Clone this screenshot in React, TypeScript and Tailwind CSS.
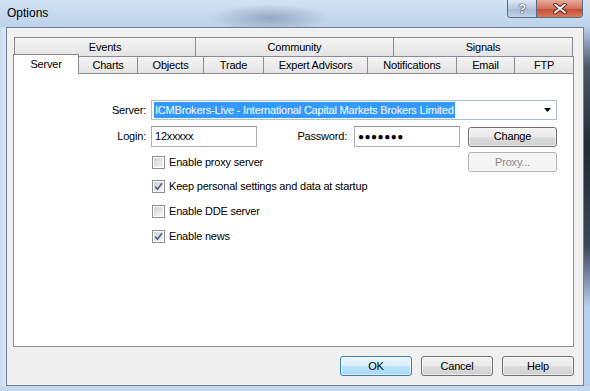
import React from "react";

const FONT = "font-['Liberation_Sans',Arial,sans-serif]";

function TopTab({ label, w, first }: { label: string; w: string; first?: boolean }) {
  return (
    <div
      className={`${w} ${first ? "" : "-ml-px"} h-[19px] border-l border-t border-r border-[#898c95] bg-[linear-gradient(to_bottom,#f4f4f4,#e4e4e4)] flex items-center justify-center pt-[1px]`}
    >
      {label}
    </div>
  );
}

function Tab({ label, w }: { label: string; w: string }) {
  return (
    <div
      className={`${w} -ml-px h-[17px] self-start border-l border-t border-r border-[#898c95] bg-[linear-gradient(to_bottom,#f4f4f4,#e4e4e4)] flex items-center justify-center pt-[1px]`}
    >
      {label}
    </div>
  );
}

function CheckBox({ checked, label }: { checked?: boolean; label: string }) {
  return (
    <div className="flex items-center h-[20px]">
      <div className="w-[13px] h-[13px] border border-[#8e8f8f] bg-white p-[1px]">
        <div className="w-full h-full bg-[linear-gradient(135deg,#cfd1d4,#f7f7f7)] flex items-center justify-center">
          {checked && (
            <svg width="9" height="9" viewBox="0 0 9 9">
              <path d="M1.2 4.6 L3.5 7.2 L8 1.2" fill="none" stroke="#4a5f8e" strokeWidth="1.7" />
            </svg>
          )}
        </div>
      </div>
      <span className="ml-[4px]">{label}</span>
    </div>
  );
}

function Button({ children, w, disabled, primary }: { children: React.ReactNode; w: string; disabled?: boolean; primary?: boolean }) {
  let cls = "";
  if (disabled) cls = "border-[#adb2b5] bg-[#f4f4f4] text-[#8a8a8a]";
  else if (primary)
    cls = "border-[#3c7fb1] bg-[linear-gradient(to_bottom,#eaf6fd_0%,#d9f0fc_50%,#bee6fd_51%,#a7d9f5_100%)] text-black";
  else
    cls = "border-[#707070] bg-[linear-gradient(to_bottom,#f2f2f2_0%,#ebebeb_50%,#dddddd_51%,#cfcfcf_100%)] text-black";
  return (
    <div className={`${w} h-[20px] rounded-[3px] border ${cls} flex items-center justify-center shadow-[inset_0_0_0_1px_rgba(255,255,255,0.6)]`}>
      {children}
    </div>
  );
}

export default function App() {
  return (
    <div
      className={`${FONT} w-[590px] h-[391px] overflow-hidden flex flex-col bg-[linear-gradient(to_bottom,#c9dbf0,#b9d0eb_40%,#c3d7ee)] text-[11px] tracking-[-0.2px] text-black`}
    >
      {/* Title bar */}
      <div className="h-[27px] flex items-start justify-between bg-[radial-gradient(ellipse_60px_14px_at_270px_18px,rgba(60,80,110,0.35),transparent),linear-gradient(to_bottom,#d2e2f4,#bcd2ec)]">
        <div className="pl-[7px] pt-[6px] text-[12px] tracking-normal text-black leading-[15px]">Options</div>
        <div className="flex mr-[7px] rounded-b-[4px] overflow-hidden border border-t-0 border-[#5a6a80]">
          <div className="w-[29px] h-[17px] bg-[linear-gradient(to_bottom,#dce7f4,#b7c9df_50%,#a3b9d4_51%,#bfd2e8)] flex items-center justify-center border-r border-[#5a6a80]">
            <span className="text-[13px] font-bold text-white leading-none [text-shadow:0_0_1px_#243850,0_0_1px_#243850,0_0_1px_#243850]">?</span>
          </div>
          <div className="w-[45px] h-[17px] bg-[linear-gradient(to_bottom,#e9ab9c,#d4705c_50%,#c54a33_51%,#d87a5c)] flex items-center justify-center">
            <svg width="14" height="11" viewBox="0 0 14 11">
              <path d="M2 1.5 L12 9.5 M12 1.5 L2 9.5" stroke="#4a1a10" strokeWidth="3.6" strokeLinecap="round" />
              <path d="M2 1.5 L12 9.5 M12 1.5 L2 9.5" stroke="#ffffff" strokeWidth="2" strokeLinecap="round" />
            </svg>
          </div>
        </div>
      </div>

      {/* Body row with frame */}
      <div className="flex-1 flex pb-[5px]">
        <div className="w-[6px] bg-[linear-gradient(to_right,#c6d9ef,#dce8f5)]" />
        <div className="w-[578px] border border-[#6e7f96] bg-[#f0f0f0] flex flex-col">
          <div className="ml-[6px] mt-[9px] flex flex-col">
            {/* Tab row 1 */}
            <div className="flex ml-[1px]">
              <TopTab label="Events" w="w-[182px]" first />
              <TopTab label="Community" w="w-[199px]" />
              <TopTab label="Signals" w="w-[180px]" />
            </div>
            {/* Tab row 2 */}
            <div className="flex items-end h-[18px] -mb-px relative z-10">
              <div className="w-[66px] h-[20px] border-l border-t border-r border-[#898c95] bg-white flex items-center justify-center pb-[1px]">
                Server
              </div>
              <Tab label="Charts" w="w-[60px]" />
              <Tab label="Objects" w="w-[67px]" />
              <Tab label="Trade" w="w-[61px]" />
              <Tab label="Expert Advisors" w="w-[105px]" />
              <Tab label="Notifications" w="w-[90px]" />
              <Tab label="Email" w="w-[59px]" />
              <Tab label="FTP" w="w-[60px]" />
            </div>
            {/* Panel */}
            <div className="w-[561px] h-[274px] border border-[#898c95] bg-white pt-[26px] flex flex-col">
              {/* Server row */}
              <div className="flex items-center h-[20px]">
                <div className="w-[132px] text-right">Server:</div>
                <div className="ml-[5px] w-[406px] h-[20px] border border-[#a7c0dc] bg-white flex items-center pl-[2px] pr-[5px]">
                  <span className="bg-[#3399ff] text-white h-[16px] leading-[16px] px-[1px]">
                    ICMBrokers-Live - International Capital Markets Brokers Limited
                  </span>
                  <div className="flex-1" />
                  <svg width="7" height="4" viewBox="0 0 7 4">
                    <path d="M0 0 H7 L3.5 4 Z" fill="#000" />
                  </svg>
                </div>
              </div>
              {/* Login row */}
              <div className="flex items-center h-[21px] mt-[6px]">
                <div className="w-[132px] text-right">Login:</div>
                <div className="ml-[5px] w-[106px] h-[21px] border border-[#abadb3] border-t-[#8e9299] bg-white flex items-center pl-[3px]">
                  12xxxxx
                </div>
                <div className="w-[90px] text-right">Password:</div>
                <div className="ml-[7px] w-[106px] h-[21px] border border-[#abadb3] border-t-[#8e9299] bg-white flex items-center pl-[3px] text-[10px] tracking-[0.5px] font-bold">
                  ●●●●●●●
                </div>
                <div className="ml-[8px]">
                  <Button w="w-[89px]">Change</Button>
                </div>
              </div>
              {/* Proxy row */}
              <div className="flex items-center h-[20px] mt-[5px]">
                <div className="w-[138px]" />
                <div className="w-[316px]">
                  <CheckBox label="Enable proxy server" />
                </div>
                <Button w="w-[89px]" disabled>
                  Proxy...
                </Button>
              </div>
              <div className="flex flex-col gap-[5px] mt-[4px] pl-[138px]">
                <CheckBox checked label="Keep personal settings and data at startup" />
                <CheckBox label="Enable DDE server" />
                <CheckBox checked label="Enable news" />
              </div>
            </div>
            {/* Buttons */}
            <div className="w-[561px] flex justify-end gap-[9px] mt-[9px]">
              <Button w="w-[72px]" primary>
                OK
              </Button>
              <Button w="w-[72px]">Cancel</Button>
              <Button w="w-[72px]">Help</Button>
            </div>
          </div>
        </div>
        <div className="w-[6px] bg-[linear-gradient(to_bottom,#b9cfe9_0px,#4a5868_40px,#1f2a33_120px,#3a4a5c_220px,#b9cfe9_280px)]" />
      </div>
    </div>
  );
}
